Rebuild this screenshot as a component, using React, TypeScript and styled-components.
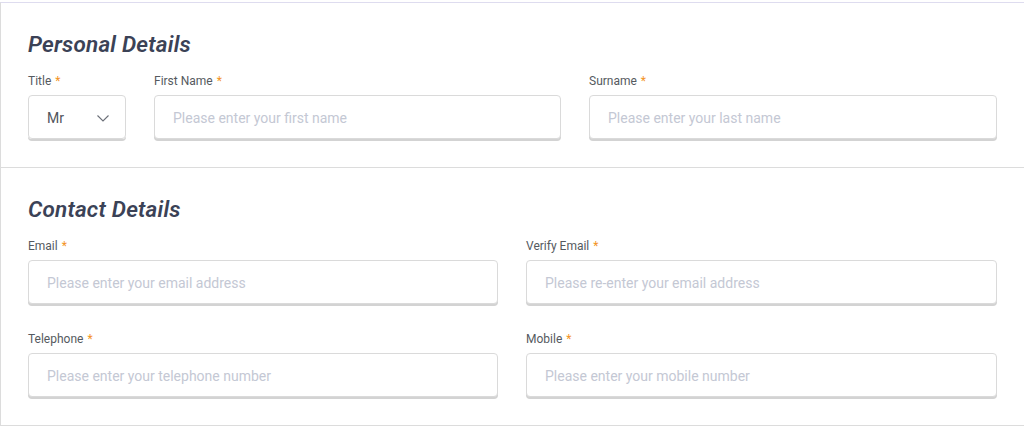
import styled, { createGlobalStyle } from "styled-components";

const GlobalStyle = createGlobalStyle`
    body {
        margin: 0;
        padding-top: 2px;
        background: #ffffff;
        font-family: Roboto, "Liberation Sans", sans-serif;
        overflow: hidden;
    }
`;

const Card = styled.div`
    width: 1040px;
    border-top: 1px solid #dedcef;
    border-left: 1px solid #dcdcdc;
    background: #fff;
`;

const Section = styled.section`
    padding: 27px 42px 28px 27px;
    border-bottom: 1px solid #dcdcdc;
`;

const Heading = styled.h2`
    margin: 0 0 14px;
    font-size: 22.5px;
    line-height: 28px;
    font-weight: 600;
    font-style: italic;
    color: #3b4256;
    letter-spacing: 0.2px;
`;

const Row = styled.div<{ cols: string }>`
    display: grid;
    grid-template-columns: ${p => p.cols};
    column-gap: 28px;

    & + & {
        margin-top: 26px;
    }
`;

const Field = styled.div`
    display: flex;
    flex-direction: column;
    gap: 7px;
`;

const Label = styled.label`
    font-size: 12px;
    line-height: 16px;
    margin-top: 1px;
    margin-bottom: -1px;
    color: #555a60;
`;

const Required = styled.span`
    color: #f39325;
    margin-left: 4px;
`;

const Input = styled.input`
    box-sizing: border-box;
    height: 44px;
    width: 100%;
    padding: 2px 18px 0;
    border: 1px solid #dadada;
    border-radius: 4px;
    box-shadow: 0 2px 0 #d3d3d3;
    font-family: inherit;
    font-size: 14px;
    color: #444;
    outline: none;
    background: #fff;

    &::placeholder {
        color: #c4c8d4;
    }
`;

const Select = styled.div`
    box-sizing: border-box;
    height: 44px;
    display: flex;
    align-items: center;
    justify-content: space-between;
    padding: 2px 16px 0 18px;
    border: 1px solid #dadada;
    border-radius: 4px;
    box-shadow: 0 2px 0 #d3d3d3;
    font-size: 14px;
    color: #50555c;

    svg {
        stroke: #6b6f78;
    }
`;

const Chevron = () => (
    <svg width="12" height="7" viewBox="0 0 12 7" fill="none">
        <polyline points="0.5,0.5 6,6 11.5,0.5" strokeWidth="1.1" />
    </svg>
);

const TextField = ({ label, placeholder }: { label: string; placeholder: string }) => (
    <Field>
        <Label>
            {label}
            <Required>*</Required>
        </Label>
        <Input placeholder={placeholder} />
    </Field>
);

export default function App() {
    return (
        <>
            <GlobalStyle />
            <Card>
                <Section>
                    <Heading>Personal Details</Heading>
                    <Row cols="98px 407px 408px">
                        <Field>
                            <Label>
                                Title
                                <Required>*</Required>
                            </Label>
                            <Select>
                                <span>Mr</span>
                                <Chevron />
                            </Select>
                        </Field>
                        <TextField label="First Name" placeholder="Please enter your first name" />
                        <TextField label="Surname" placeholder="Please enter your last name" />
                    </Row>
                </Section>
                <Section>
                    <Heading>Contact Details</Heading>
                    <Row cols="470px 471px">
                        <TextField label="Email" placeholder="Please enter your email address" />
                        <TextField label="Verify Email" placeholder="Please re-enter your email address" />
                    </Row>
                    <Row cols="470px 471px">
                        <TextField label="Telephone" placeholder="Please enter your telephone number" />
                        <TextField label="Mobile" placeholder="Please enter your mobile number" />
                    </Row>
                </Section>
            </Card>
        </>
    );
}
